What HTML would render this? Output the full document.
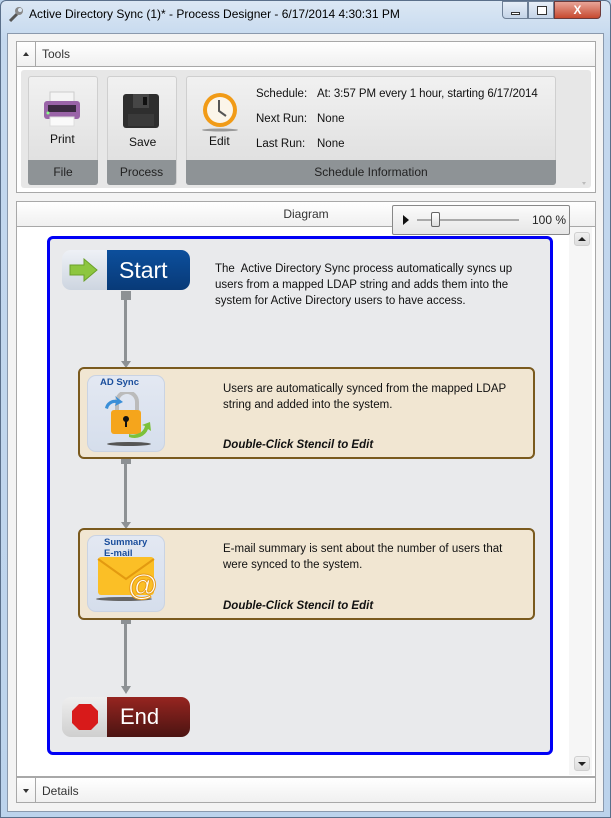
<!DOCTYPE html>
<html><head><style>
*{box-sizing:border-box;margin:0;padding:0}
body{width:611px;height:818px;position:relative;overflow:hidden;font-family:"Liberation Sans",sans-serif;font-size:12px;color:#111;background:#b9d1ea}
.abs{position:absolute}
.frame{left:0;top:0;width:611px;height:818px;background:linear-gradient(#dbe7f4,#c4d8ee 40px,#bcd3ec);border:1px solid #5a6f8a;border-radius:6px 6px 0 0}
.client{left:7px;top:33px;width:597px;height:779px;background:#f3f3f3;border:1px solid #8a99ad}
.panel{background:#fff;border:1px solid #a8a8a8}
.hdr{background:linear-gradient(#fff,#f0f0f0);border-bottom:1px solid #a8a8a8;height:25px;font-size:12px;color:#333}
.btn{background:linear-gradient(#f1f1f1,#dcdcdc);border:1px solid #cfcfcf;border-radius:3px}
.ftr{background:#8e9396;color:#222;text-align:center;font-size:12px;line-height:25px;border-radius:0 0 3px 3px}
.node{border-radius:9px;overflow:hidden;display:flex}
.sten{background:#f1e6d2;border:2px solid #7a5a1e;border-radius:6px}
.ibox{background:linear-gradient(#e3e8f2,#d5deec);border-radius:9px;border:1px solid #c9d3e3}
.line{background:#8d9194}
.sq{background:#8d9194;width:10px;height:9px}
</style></head><body>
<div class="abs frame"></div>
<svg class="abs" style="left:7px;top:6px" width="18" height="18" viewBox="0 0 18 18"><path d="M3 15 L10 8" stroke="#555" stroke-width="3"/><circle cx="12" cy="5" r="4" fill="#888"/><circle cx="13" cy="4" r="2" fill="#dbe7f4"/></svg>
<div class="abs" style="left:29px;top:7px;font-size:12px;color:#000">Active Directory Sync (1)* - Process Designer - 6/17/2014 4:30:31 PM</div>
<div class="abs" style="left:502px;top:1px;width:26px;height:18px;border:1px solid #6d7f96;border-radius:0 0 0 4px;background:linear-gradient(#e6eef8,#c4d4e8)"><div class="abs" style="left:8px;top:10px;width:9px;height:3px;background:#fff;border:1px solid #333"></div></div>
<div class="abs" style="left:528px;top:1px;width:26px;height:18px;border:1px solid #6d7f96;background:linear-gradient(#e6eef8,#c4d4e8)"><div class="abs" style="left:8px;top:4px;width:10px;height:9px;border:1px solid #333;background:#fff"></div></div>
<div class="abs" style="left:554px;top:1px;width:47px;height:18px;border:1px solid #6d3a3a;border-radius:0 0 4px 0;background:linear-gradient(#e8a598,#c7492f);color:#fff;font-weight:bold;text-align:center;font-size:12px;line-height:16px">X</div>
<div class="abs client"></div>
<div class="abs panel" style="left:16px;top:41px;width:580px;height:152px">
 <div class="hdr" style="position:relative"><div class="abs" style="left:0;top:0;width:19px;height:24px;border-right:1px solid #a8a8a8"></div><div class="abs" style="left:6px;top:10px;border:3px solid transparent;border-bottom:4px solid #333;border-top:0"></div><div class="abs" style="left:25px;top:5px">Tools</div></div>
 <div class="abs" style="left:4px;top:28px;width:570px;height:118px;background:#e7e7e7;border-radius:3px"></div>
</div>
<div class="abs btn" style="left:28px;top:76px;width:70px;height:109px"></div>
<div class="abs btn" style="left:107px;top:76px;width:70px;height:109px"></div>
<div class="abs btn" style="left:186px;top:76px;width:370px;height:109px"></div>
<div class="abs ftr" style="left:28px;top:160px;width:70px">File</div>
<div class="abs ftr" style="left:107px;top:160px;width:69px">Process</div>
<div class="abs ftr" style="left:186px;top:160px;width:370px">Schedule Information</div>
<svg class="abs" style="left:42px;top:91px" width="40" height="38"><rect x="8" y="1" width="24" height="10" fill="#f4f4f4" stroke="#ccc"/><rect x="2" y="10" width="36" height="18" rx="3" fill="#9a64a8"/><rect x="6" y="14" width="28" height="7" fill="#3a2a40"/><rect x="8" y="26" width="24" height="9" fill="#fafafa" stroke="#ddd"/><circle cx="6" cy="22" r="1.5" fill="#8f8"/></svg>
<div class="abs" style="left:50px;top:132px">Print</div>
<svg class="abs" style="left:123px;top:92px" width="36" height="38"><rect x="0" y="2" width="36" height="34" rx="3" fill="#2e2e2e"/><rect x="10" y="2" width="16" height="14" fill="#464646"/><rect x="20" y="5" width="4" height="8" fill="#111"/><rect x="5" y="22" width="26" height="12" fill="#3a3a3a"/></svg>
<div class="abs" style="left:129px;top:135px">Save</div>
<svg class="abs" style="left:199px;top:90px" width="42" height="42"><circle cx="21" cy="20" r="17" fill="#f19b17"/><circle cx="21" cy="20" r="13" fill="#fbf5ea"/><path d="M20 10 L20 21 L27 26" stroke="#555" stroke-width="2" fill="none"/><ellipse cx="21" cy="40" rx="18" ry="1.5" fill="#999"/></svg>
<div class="abs" style="left:209px;top:134px">Edit</div>
<div class="abs" style="left:256px;top:88px;font-size:11.5px">Schedule:</div>
<div class="abs" style="left:317px;top:88px;font-size:11.5px;letter-spacing:-0.1px">At: 3:57 PM every 1 hour, starting 6/17/2014</div>
<div class="abs" style="left:256px;top:113px;font-size:11.5px">Next Run:</div><div class="abs" style="left:317px;top:113px;font-size:11.5px">None</div>
<div class="abs" style="left:256px;top:138px;font-size:11.5px">Last Run:</div><div class="abs" style="left:317px;top:138px;font-size:11.5px">None</div>
<div class="abs" style="left:582px;top:182px;border:2px solid transparent;border-top:3px solid #bbb"></div>
<div class="abs panel" style="left:16px;top:201px;width:580px;height:576px">
 <div class="hdr" style="text-align:center;line-height:24px;color:#333">Diagram</div>
</div>
<div class="abs" style="left:569px;top:227px;width:23px;height:548px;background:#f6f6f6"></div>
<div class="abs btn" style="left:574px;top:232px;width:16px;height:14px"><div class="abs" style="left:3px;top:4px;border:4px solid transparent;border-bottom:4px solid #222;border-top:0"></div></div>
<div class="abs btn" style="left:574px;top:756px;width:16px;height:15px"><div class="abs" style="left:3px;top:5px;border:4px solid transparent;border-top:4px solid #222;border-bottom:0"></div></div>
<div class="abs" style="left:392px;top:205px;width:178px;height:30px;background:linear-gradient(#fbfbfb,#e6e6e6);border:1px solid #888;border-radius:2px"></div>
<div class="abs" style="left:403px;top:215px;border:4px solid transparent;border-left:6px solid #111;border-right:0;border-top-width:5px;border-bottom-width:5px"></div>
<div class="abs" style="left:417px;top:219px;width:102px;height:2px;background:#aaa"></div>
<div class="abs" style="left:431px;top:212px;width:9px;height:15px;background:linear-gradient(#fff,#ddd);border:1px solid #666;border-radius:2px"></div>
<div class="abs" style="left:532px;top:213px;color:#222">100 %</div>
<div class="abs" style="left:47px;top:236px;width:506px;height:519px;background:#e9eaec;border:3px solid #0000f5;border-radius:6px"></div>
<div class="abs sq" style="left:121px;top:291px"></div>
<div class="abs line" style="left:124px;top:298px;width:3px;height:64px"></div>
<div class="abs" style="left:121px;top:361px;border:5px solid transparent;border-top:7px solid #8d9194;border-bottom:0"></div>
<div class="abs sq" style="left:121px;top:455px"></div>
<div class="abs line" style="left:124px;top:462px;width:3px;height:61px"></div>
<div class="abs" style="left:121px;top:522px;border:5px solid transparent;border-top:7px solid #8d9194;border-bottom:0"></div>
<div class="abs sq" style="left:121px;top:615px"></div>
<div class="abs line" style="left:124px;top:622px;width:3px;height:65px"></div>
<div class="abs" style="left:121px;top:686px;border:5px solid transparent;border-top:8px solid #8d9194;border-bottom:0"></div>
<div class="abs node" style="left:62px;top:250px;width:128px;height:40px">
 <div style="width:45px;background:linear-gradient(#eef1f6,#cdd5e0);position:relative"><svg class="abs" style="left:7px;top:8px" width="30" height="24"><path d="M1 7 H15 V1 L28 12 L15 23 V17 H1 Z" fill="#8dc63f" stroke="#6aa02a"/></svg></div>
 <div style="flex:1;background:linear-gradient(#0c4f9c,#083a78);color:#fff;font-size:23px;line-height:40px;padding-left:12px">Start</div>
</div>
<div class="abs" style="left:215px;top:261px;line-height:16px;font-size:11.5px;color:#111">The&nbsp; Active Directory Sync process automatically syncs up<br>users from a mapped LDAP string and adds them into the<br>system for Active Directory users to have access.</div>
<div class="abs sten" style="left:78px;top:367px;width:457px;height:92px"></div>
<div class="abs ibox" style="left:87px;top:375px;width:78px;height:77px"></div>
<div class="abs" style="left:87px;top:377px;width:65px;text-align:center;font-size:9.5px;font-weight:bold;color:#1b4e9c">AD Sync</div>
<svg class="abs" style="left:103px;top:392px" width="52" height="56"><path d="M14 18 V10 a10 10 0 0 1 20 0 V18" stroke="#bbb" stroke-width="4" fill="none"/><rect x="8" y="18" width="30" height="24" rx="3" fill="#f5a51c"/><circle cx="23" cy="27" r="3" fill="#111"/><rect x="22" y="28" width="2" height="7" fill="#111"/><path d="M2 16 a10 10 0 0 1 12 -8 l-2 -4 l8 6 l-8 4 l1 -3 a7 7 0 0 0 -8 6z" fill="#3a8fd8"/><path d="M26 42 a12 10 0 0 0 16 -8 l-3 -1 l8 -3 l1 9 l-3 -2 a14 12 0 0 1 -19 8z" fill="#7cc13a"/><ellipse cx="26" cy="52" rx="22" ry="2" fill="#555"/></svg>
<div class="abs" style="left:223px;top:381px;line-height:16px;font-size:11.5px">Users are automatically synced from the mapped LDAP<br>string and added into the system.</div>
<div class="abs" style="left:223px;top:439px;font-size:11.5px;font-weight:bold;font-style:italic">Double-Click Stencil to Edit</div>
<div class="abs sten" style="left:78px;top:528px;width:457px;height:92px"></div>
<div class="abs ibox" style="left:87px;top:535px;width:78px;height:77px"></div>
<svg class="abs" style="left:94px;top:555px" width="66" height="50"><rect x="4" y="2" width="56" height="38" rx="3" fill="#fbbf26"/><path d="M4 4 L32 24 L60 4" stroke="#e39a10" stroke-width="2" fill="none"/><ellipse cx="30" cy="44" rx="28" ry="2" fill="#666"/><text x="34" y="40" font-family="Liberation Sans" font-size="30" font-weight="bold" fill="#fff" stroke="#e79c1a" stroke-width="1">@</text></svg>
<div class="abs" style="left:104px;top:537px;font-size:9.5px;font-weight:bold;color:#1b4e9c;line-height:11px">Summary<br>E-mail</div>
<div class="abs" style="left:223px;top:541px;line-height:16px;font-size:11.5px">E-mail summary is sent about the number of users that<br>were synced to the system.</div>
<div class="abs" style="left:223px;top:600px;font-size:11.5px;font-weight:bold;font-style:italic">Double-Click Stencil to Edit</div>
<div class="abs node" style="left:62px;top:697px;width:128px;height:40px">
 <div style="width:45px;background:linear-gradient(#eee,#cfcfcf);position:relative"><svg class="abs" style="left:9px;top:6px" width="28" height="28"><polygon points="8,1 20,1 27,8 27,20 20,27 8,27 1,20 1,8" fill="#d81a1a"/></svg></div>
 <div style="flex:1;background:linear-gradient(#962520,#4b1412);color:#fff;font-size:22px;line-height:40px;padding-left:13px">End</div>
</div>
<div class="abs panel" style="left:16px;top:777px;width:580px;height:26px;background:linear-gradient(#fff,#f0f0f0)">
 <div class="abs" style="left:0;top:0;width:19px;height:24px;border-right:1px solid #a8a8a8"></div>
 <div class="abs" style="left:6px;top:11px;border:3px solid transparent;border-top:4px solid #333;border-bottom:0"></div>
 <div class="abs" style="left:25px;top:6px;color:#333">Details</div>
</div>
</body></html>
